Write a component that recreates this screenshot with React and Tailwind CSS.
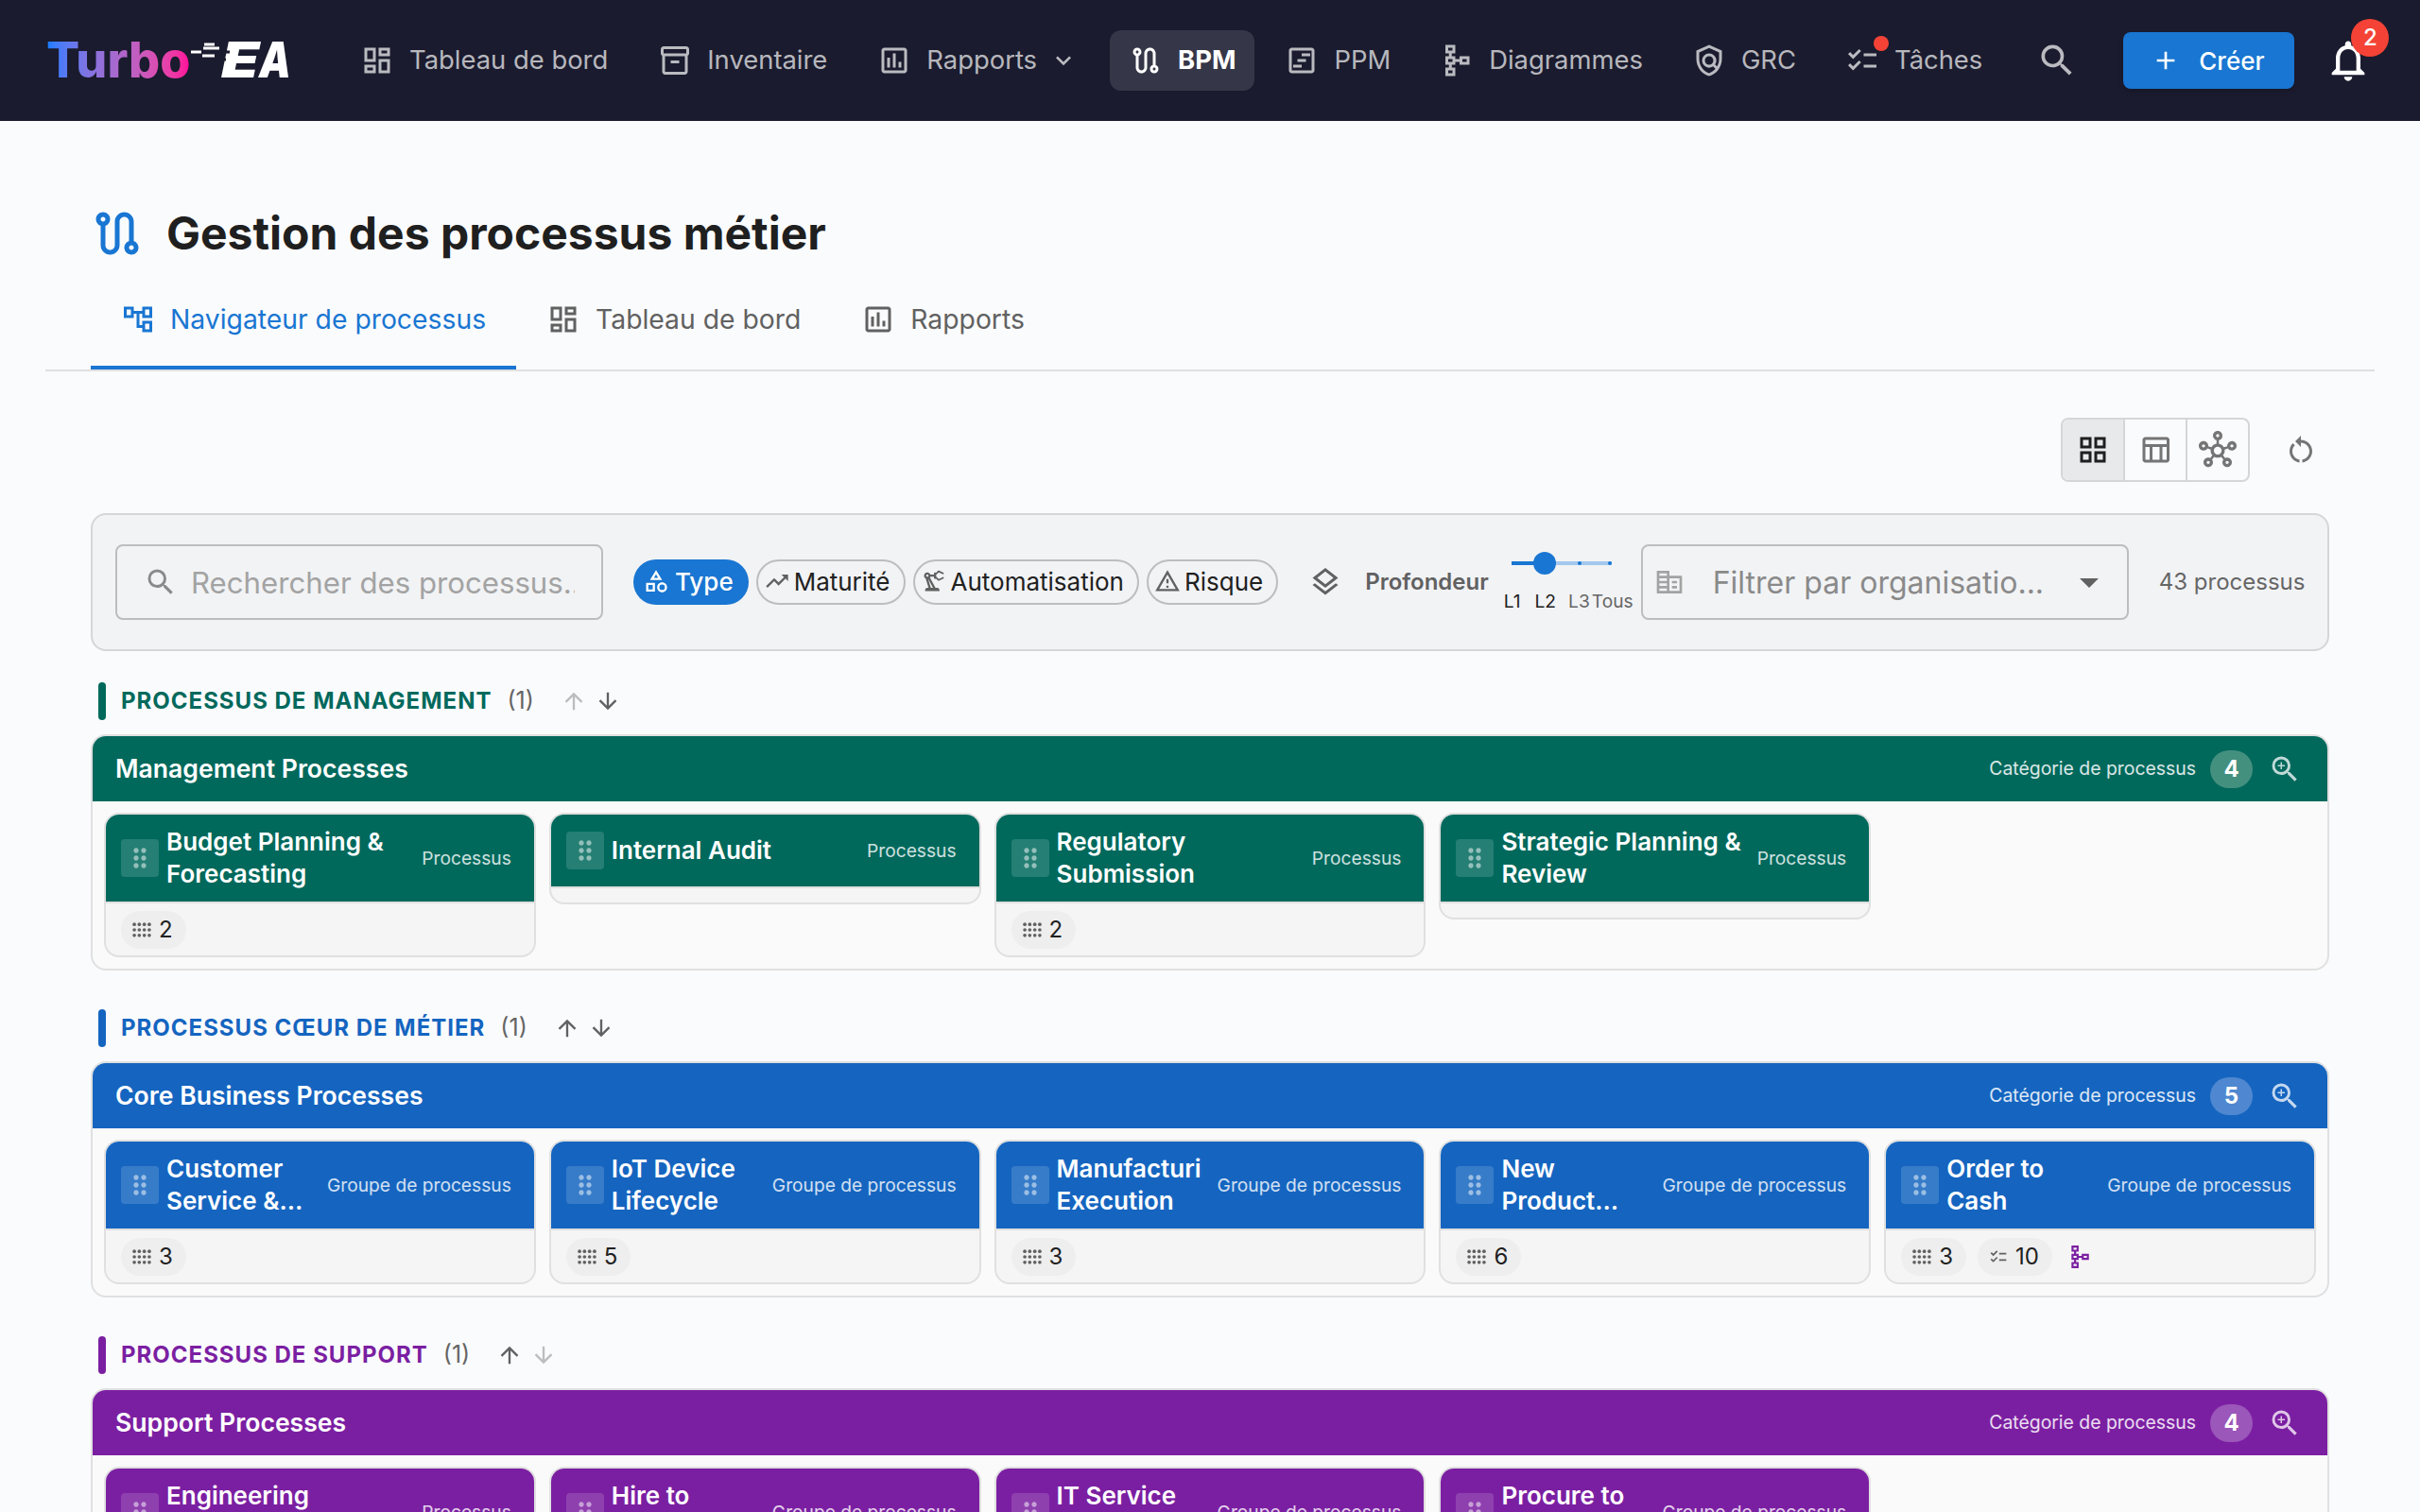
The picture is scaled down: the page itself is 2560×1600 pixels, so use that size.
import {
  MdAdd,
  MdArrowDownward,
  MdArrowUpward,
  MdArrowDropDown,
  MdDragIndicator,
  MdKeyboardArrowDown,
  MdOutlineAccountTree,
  MdOutlineAssessment,
  MdOutlineCategory,
  MdOutlineChecklist,
  MdOutlineCorporateFare,
  MdOutlineDashboard,
  MdOutlineGridView,
  MdOutlineHub,
  MdOutlineInventory2,
  MdOutlineLayers,
  MdOutlineNotifications,
  MdOutlinePolicy,
  MdOutlinePrecisionManufacturing,
  MdOutlineRoute,
  MdOutlineSchema,
  MdOutlineSearch,
  MdOutlineTableChart,
  MdOutlineTrendingUp,
  MdOutlineViewTimeline,
  MdOutlineWarningAmber,
  MdOutlineZoomIn,
  MdRestartAlt,
} from "react-icons/md";

const DotsIcon = ({ className }) => (
  <svg className={className} viewBox="0 0 24 24" fill="currentColor">
    {[5, 12, 19].map((y) =>
      [2.5, 8.8, 15.2, 21.5].map((x) => <circle key={`${x}-${y}`} cx={x} cy={y} r="2.2" />)
    )}
  </svg>
);

const NavItem = ({ icon: Icon, label, active, caret, dot }) => (
  <div
    className={`relative flex h-[64px] items-center gap-[16px] rounded-[12px] px-[20px] text-[27.4px] ${
      active ? "bg-white/12 font-bold text-white" : "text-white/70"
    }`}
  >
    <Icon className="h-[36px] w-[36px]" />
    <span>{label}</span>
    {caret && <MdKeyboardArrowDown className="ml-[-4px] h-[32px] w-[32px]" />}
    {dot && <span className="absolute left-[50px] top-[6px] h-[16px] w-[16px] rounded-full bg-[#f44336]" />}
  </div>
);

const Logo = () => (
  <div className="relative ml-[49px] mr-[56px] flex w-[256px] items-center text-[52px] leading-none font-extrabold">
    <span className="bg-gradient-to-r from-[#0a7cff] to-[#ff0099] bg-clip-text text-transparent">Turbo</span>
    <span className="ml-[33px] inline-block origin-left scale-x-[1.25] font-black text-white italic">E</span>
    <span className="ml-[7px] inline-block origin-left scale-x-[0.82] font-black text-white italic">A</span>
    <svg className="absolute left-[150px] top-0" width="60" height="30" viewBox="0 0 60 30">
      <path d="M3 17h11M17 9h11M16 13h17M15 21h13" stroke="#ffffff" strokeWidth="3" />
      <path d="M26 17h18M30 25h10" stroke="#1a1b2e" strokeWidth="3" />
    </svg>
  </div>
);

const TopNav = () => (
  <div className="flex h-[128px] items-center bg-[#1a1b2e]">
    <Logo />
    <div className="flex items-center gap-[13px]">
      <NavItem icon={MdOutlineDashboard} label="Tableau de bord" />
      <NavItem icon={MdOutlineInventory2} label="Inventaire" />
      <NavItem icon={MdOutlineAssessment} label="Rapports" caret />
      <div className="flex items-center gap-[12px]">
        <NavItem icon={MdOutlineRoute} label="BPM" active />
        <NavItem icon={MdOutlineViewTimeline} label="PPM" />
        <NavItem icon={MdOutlineSchema} label="Diagrammes" />
        <NavItem icon={MdOutlinePolicy} label="GRC" />
        <NavItem icon={MdOutlineChecklist} label="Tâches" dot />
      </div>
    </div>
    <MdOutlineSearch className="ml-[37px] h-[44px] w-[44px] text-white/70" />
    <button className="ml-[48px] flex h-[60px] w-[181px] items-center gap-[19px] rounded-[8px] bg-[#1976d2] pl-[29px] text-[26px] font-medium text-white shadow-md">
      <MdAdd className="h-[32px] w-[32px]" />
      Créer
    </button>
    <div className="relative ml-[31px]">
      <MdOutlineNotifications className="h-[52px] w-[52px] text-white" />
      <span className="absolute left-[29px] top-[-18px] flex h-[40px] w-[40px] items-center justify-center rounded-full bg-[#f44336] text-[24px] font-medium text-white">
        2
      </span>
    </div>
  </div>
);

const Tab = ({ icon: Icon, label, active }) => (
  <div
    className={`flex h-[108px] items-center gap-[16px] border-b-4 px-[32px] pt-[6px] text-[28.3px] ${
      active ? "border-[#1976d2] text-[#1976d2]" : "border-transparent text-[#616161]"
    }`}
  >
    <Icon className="h-[36px] w-[36px]" />
    {label}
  </div>
);

const Chip = ({ icon: Icon, label, active }) => (
  <div
    className={`flex h-[48px] items-center rounded-full pb-[2px] text-[26px] ${
      active
        ? "gap-[6px] bg-[#1976d2] pl-[10px] pr-[16px] font-medium text-white"
        : "gap-[4px] border-2 border-[#bdbdbd] pl-[6px] pr-[14px] text-[#212121]"
    }`}
  >
    <Icon className={`h-[28px] w-[28px] ${active ? "text-white" : "text-[#616161]"}`} />
    {label}
  </div>
);

const DepthSlider = () => (
  <div className="ml-[16px] flex w-[135px] shrink-0 flex-col pt-[2px]">
    <div className="relative ml-[8px] h-[24px] w-[106px]">
      <div className="absolute left-0 right-0 top-[10px] h-[4px] bg-[#a3c8ee]" />
      <div className="absolute left-0 top-[10px] h-[4px] w-[35px] bg-[#1976d2]" />
      <div className="absolute left-[70px] top-[10px] h-[4px] w-[4px] rounded-full bg-[#1976d2]" />
      <div className="absolute right-0 top-[10px] h-[4px] w-[4px] rounded-full bg-[#1976d2]" />
      <div className="absolute left-[23px] top-0 h-[24px] w-[24px] rounded-full bg-[#1976d2]" />
    </div>
    <div className="mt-[14px] flex whitespace-nowrap text-[19.2px] leading-[28px] text-[#666666]">
      <span className="text-[#212121]">L1</span>
      <span className="ml-[15px] text-[#212121]">L2</span>
      <span className="ml-[13px]">L3</span>
      <span className="ml-[2px]">Tous</span>
    </div>
  </div>
);

const FilterBar = () => (
  <div className="mt-[33px] flex h-[146px] items-center rounded-[16px] border-2 border-[#d5d6d9] bg-[#f2f3f5] pl-[24px]">
    <div className="flex h-[80px] w-[516px] shrink-0 items-center rounded-[8px] border-2 border-[#bdbdbd] pl-[28px] pr-[28px]">
      <MdOutlineSearch className="h-[36px] w-[36px] shrink-0 text-[#8a8a8a]" />
      <input
        readOnly
        placeholder="Rechercher des processus..."
        className="ml-[14px] min-w-0 flex-1 bg-transparent pt-[2px] text-[31.2px] outline-none placeholder:text-[#a3a3a3]"
      />
    </div>
    <div className="ml-[32px] flex items-center gap-[8px]">
      <Chip icon={MdOutlineCategory} label="Type" active />
      <Chip icon={MdOutlineTrendingUp} label="Maturité" />
      <Chip icon={MdOutlinePrecisionManufacturing} label="Automatisation" />
      <Chip icon={MdOutlineWarningAmber} label="Risque" />
    </div>
    <MdOutlineLayers className="ml-[32px] h-[36px] w-[36px] shrink-0 text-[#616161]" />
    <span className="ml-[24px] text-[24px] font-semibold text-[#616161]">Profondeur</span>
    <DepthSlider />
    <div className="ml-[10px] flex h-[80px] w-[516px] shrink-0 items-center rounded-[8px] border-2 border-[#bdbdbd] pl-[12px] pr-[16px]">
      <MdOutlineCorporateFare className="h-[32px] w-[32px] text-[#a3a3a3]" />
      <span className="ml-[30px] flex-1 whitespace-nowrap pt-[2px] text-[32px] text-[#8a8a8a]">
        Filtrer par organisatio...
      </span>
      <MdArrowDropDown className="h-[48px] w-[48px] text-[#616161]" />
    </div>
    <span className="ml-[32px] whitespace-nowrap text-[24px] text-[#666666]">43 processus</span>
  </div>
);

const Stat = ({ icon: Icon, value }) => (
  <div className="flex h-[40px] items-center gap-[8px] rounded-full bg-[#eeeeee] pl-[12px] pr-[14px] text-[24px] text-[#212121]">
    <Icon className="h-[20px] w-[20px] text-[#616161]" />
    {value}
  </div>
);

const ProcessCard = ({ title, type, color, subs, tasks, diagram }) => (
  <div className="overflow-hidden rounded-[16px] border-2 border-[#e0e0e0] bg-[#f5f5f5]">
    <div
      className="flex min-h-[76px] items-center gap-[8px] py-[12px] pl-[16px] pr-[24px]"
      style={{ backgroundColor: color }}
    >
      <div className="flex h-[40px] w-[40px] shrink-0 items-center justify-center rounded-[4px] bg-white/15">
        <MdDragIndicator className="h-[32px] w-[32px] text-white/50" />
      </div>
      <div className="line-clamp-2 min-w-0 flex-1 text-[26px] leading-[34px] font-semibold text-white">{title}</div>
      <span className="ml-[8px] shrink-0 text-[19.2px] text-white/80">{type}</span>
    </div>
    <div className="flex items-center gap-[12px] border-t-2 border-[#e0e0e0] px-[16px] pb-[7px] pt-[8px]">
      {subs && <Stat icon={DotsIcon} value={subs} />}
      {tasks && <Stat icon={MdOutlineChecklist} value={tasks} />}
      {diagram && <MdOutlineSchema className="ml-[4px] h-[26px] w-[26px] text-[#7b1fa2]" />}
    </div>
  </div>
);

const Section = ({ title, color, badge, name, count, up, down, cards }) => (
  <div className="mb-[41px]">
    <div className="flex h-[40px] items-center pl-[8px]">
      <span className="h-[40px] w-[8px] rounded-[4px]" style={{ backgroundColor: color }} />
      <span className="ml-[16px] text-[24px] font-bold tracking-[1px] uppercase" style={{ color }}>
        {title}
      </span>
      <span className="ml-[16px] text-[25px] text-[#666666]">(1)</span>
      <MdArrowUpward className={`ml-[28px] h-[28px] w-[28px] ${up ? "text-[#616161]" : "text-[#bdbdbd]"}`} />
      <MdArrowDownward className={`ml-[8px] h-[28px] w-[28px] ${down ? "text-[#616161]" : "text-[#bdbdbd]"}`} />
    </div>
    <div className="mt-[15px] overflow-hidden rounded-[16px] border-2 border-[#e0e0e0] bg-[#fafafa]">
      <div className="flex h-[69px] items-center pl-[24px] pr-[27px] text-white" style={{ backgroundColor: color }}>
        <span className="flex-1 text-[26.6px] font-semibold">{name}</span>
        <span className="text-[19.4px] text-white/85">Catégorie de processus</span>
        <span
          className="ml-[15px] flex h-[40px] w-[45px] items-center justify-center rounded-full text-[24px] font-bold"
          style={{ backgroundColor: badge }}
        >
          {count}
        </span>
        <MdOutlineZoomIn className="ml-[16px] h-[36px] w-[36px] text-white/75" />
      </div>
      <div className="grid grid-cols-5 items-start gap-[14px] p-[12px]">
        {cards.map((c) => (
          <ProcessCard key={c.title} color={color} {...c} />
        ))}
      </div>
    </div>
  </div>
);

const GROUP = "Groupe de processus";

export default function App() {
  return (
    <div className="h-[1600px] w-full overflow-hidden bg-[#fafbfd] font-[family-name:Inter,sans-serif]">
      <TopNav />
      <div className="px-[48px] pt-[83px]">
        <div className="flex h-[72px] items-center gap-[22px] pl-[46px]">
          <MdOutlineRoute className="h-[60px] w-[60px] text-[#1976d2]" />
          <h1 className="text-[48px] font-bold text-[#1f1f1f]">Gestion des processus métier</h1>
        </div>
        <div className="flex border-b-2 border-[#e0e0e0] pl-[48px]">
          <Tab icon={MdOutlineAccountTree} label="Navigateur de processus" active />
          <Tab icon={MdOutlineDashboard} label="Tableau de bord" />
          <Tab icon={MdOutlineAssessment} label="Rapports" />
        </div>
        <div className="px-[48px]">
          <div className="mt-[49px] flex h-[68px] items-center justify-end">
            <div className="flex overflow-hidden rounded-[8px] border-2 border-[#d5d6d9]">
              <div className="flex h-[64px] w-[64px] items-center justify-center bg-[#e8e9eb]">
                <MdOutlineGridView className="h-[36px] w-[36px] text-[#1f1f1f]" />
              </div>
              <div className="flex h-[64px] w-[66px] items-center justify-center border-l-2 border-[#d5d6d9]">
                <MdOutlineTableChart className="h-[36px] w-[36px] text-[#757575]" />
              </div>
              <div className="flex h-[64px] w-[66px] items-center justify-center border-l-2 border-[#d5d6d9]">
                <MdOutlineHub className="h-[40px] w-[40px] text-[#757575]" />
              </div>
            </div>
            <MdRestartAlt className="ml-[36px] mr-[12px] h-[36px] w-[36px] text-[#757575]" />
          </div>
          <FilterBar />
          <div className="mt-[33px]">
            <Section
              title="Processus de management"
              name="Management Processes"
              color="#00695c"
              badge="#44907f"
              count="4"
              down
              cards={[
                { title: "Budget Planning & Forecasting", type: "Processus", subs: "2" },
                { title: "Internal Audit", type: "Processus" },
                { title: "Regulatory Submission", type: "Processus", subs: "2" },
                { title: "Strategic Planning & Review", type: "Processus" },
              ]}
            />
            <Section
              title="Processus cœur de métier"
              name="Core Business Processes"
              color="#1565c0"
              badge="#4f88d0"
              count="5"
              up
              down
              cards={[
                { title: "Customer Service & Support", type: GROUP, subs: "3" },
                { title: "IoT Device Lifecycle", type: GROUP, subs: "5" },
                { title: "Manufacturing Execution", type: GROUP, subs: "3" },
                { title: "New Product Development", type: GROUP, subs: "6" },
                { title: "Order to Cash", type: GROUP, subs: "3", tasks: "10", diagram: true },
              ]}
            />
            <Section
              title="Processus de support"
              name="Support Processes"
              color="#7b1fa2"
              badge="#9b57b9"
              count="4"
              up
              cards={[
                { title: "Engineering Change", type: "Processus", subs: "2" },
                { title: "Hire to Retire", type: GROUP, subs: "3" },
                { title: "IT Service Management", type: GROUP, subs: "3" },
                { title: "Procure to Pay", type: GROUP, subs: "4" },
              ]}
            />
          </div>
        </div>
      </div>
    </div>
  );
}
